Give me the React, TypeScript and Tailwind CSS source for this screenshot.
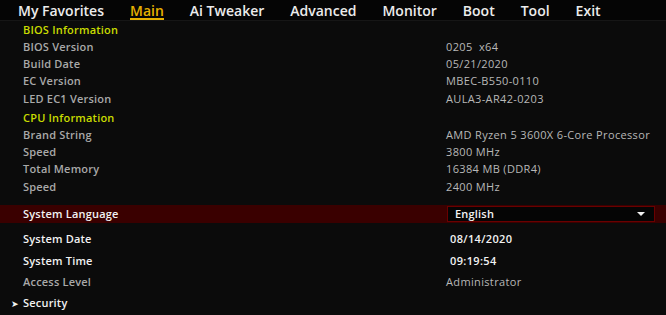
import React from 'react'

const tabs = ['My Favorites', 'Main', 'Ai Tweaker', 'Advanced', 'Monitor', 'Boot', 'Tool', 'Exit']

interface RowProps {
  label: string
  value?: string
  h: string
  kind?: 'header' | 'info' | 'bold'
}

const Row: React.FC<RowProps> = ({ label, value, h, kind = 'info' }) => {
  const labelCls =
    kind === 'header'
      ? 'text-[#c9dc00] font-semibold'
      : kind === 'bold'
        ? 'text-[#f2f2f2] font-semibold'
        : 'text-[#a9a9a9] font-semibold'
  return (
    <div className={`flex items-center ${h}`}>
      <div className={`w-[446px] shrink-0 pl-[23px] text-[11px] tracking-[0.2px] ${labelCls}`}>{label}</div>
      {value && (
        <div
          className={`whitespace-pre text-[11px] tracking-[0.35px] ${
            kind === 'bold' ? 'pl-[4px] font-semibold text-[#f2f2f2]' : 'text-[#b8b8b8]'
          }`}
        >
          {value}
        </div>
      )}
    </div>
  )
}

export default function App() {
  return (
    <div className="w-[666px] h-[315px] overflow-hidden bg-[#0b0b0b]" style={{ fontFamily: '"Open Sans", "Noto Sans", sans-serif' }}>
      <div className="flex h-[21px] items-center gap-[26px] bg-[#050505] pl-[18px] pt-[2px] border-b border-[#161616]">
        {tabs.map(t => (
          <div
            key={t}
            className={`relative text-[14px] font-semibold leading-none ${t === 'Main' ? 'text-[#e6b000]' : 'text-[#ececec]'}`}
          >
            {t}
            {t === 'Main' && <div className="absolute left-0 right-0 top-[14px] h-[2px] bg-[#e6b000]" />}
          </div>
        ))}
      </div>

      <Row label="BIOS Information" h="h-[18px]" kind="header" />
      <Row label="BIOS Version" value="0205  x64" h="h-[17px]" />
      <Row label="Build Date" value="05/21/2020" h="h-[17px]" />
      <Row label="EC Version" value="MBEC-B550-0110" h="h-[17px]" />
      <Row label="LED EC1 Version" value="AULA3-AR42-0203" h="h-[19px]" />
      <Row label="CPU Information" h="h-[18px]" kind="header" />
      <Row label="Brand String" value="AMD Ryzen 5 3600X 6-Core Processor" h="h-[17px]" />
      <Row label="Speed" value="3800 MHz" h="h-[17px]" />
      <Row label="Total Memory" value="16384 MB (DDR4)" h="h-[17px]" />
      <Row label="Speed" value="2400 MHz" h="h-[18px]" />

      <div className="mt-[9px] flex h-[18px] items-center bg-[#3a0000]">
        <div className="w-[447px] shrink-0 pl-[23px] text-[11px] font-semibold tracking-[0.2px] text-[#f2f2f2]">System Language</div>
        <div className="flex h-[16px] w-[208px] items-center justify-between border border-[#6a0000] bg-[#050505] pl-[7px] pr-[9px]">
          <span className="text-[11px] font-semibold tracking-[0.2px] text-[#f2f2f2]">English</span>
          <svg width="8" height="4" viewBox="0 0 8 4">
            <path d="M0 0 L8 0 L4 4 Z" fill="#f0f0f0" />
          </svg>
        </div>
      </div>

      <div className="mt-[5px]">
        <Row label="System Date" value="08/14/2020" h="h-[22px]" kind="bold" />
        <Row label="System Time" value="09:19:54" h="h-[22px]" kind="bold" />
        <Row label="Access Level" value="Administrator" h="h-[21px]" />
        <div className="relative flex h-[21px] items-center">
          <span className="absolute left-[11px] text-[9px] text-[#f2f2f2]">➤</span>
          <span className="pl-[23px] text-[11px] font-semibold tracking-[0.2px] text-[#f2f2f2]">Security</span>
        </div>
      </div>
    </div>
  )
}
